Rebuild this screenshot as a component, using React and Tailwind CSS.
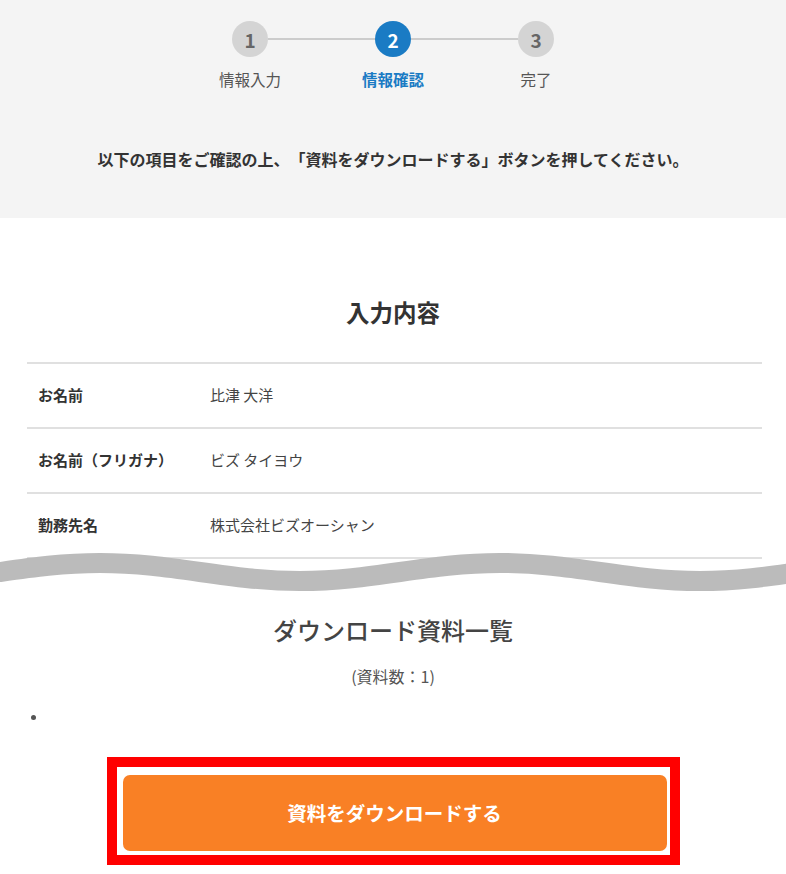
import React from 'react';

const FONT = { fontFamily: '"Noto Sans CJK JP", "Noto Sans", sans-serif' };

const steps = [
    { no: 1, label: '情報入力' },
    { no: 2, label: '情報確認', active: true },
    { no: 3, label: '完了' },
];

const rows = [
    { label: 'お名前', value: '比津 大洋' },
    { label: 'お名前（フリガナ）', value: 'ビズ タイヨウ' },
    { label: '勤務先名', value: '株式会社ビズオーシャン' },
];

const StepCircle = ({ no, active }) => (
    <div
        className={`w-[36px] h-[36px] rounded-full flex items-center justify-center text-[19px] font-bold leading-none ${
            active ? 'bg-[#1a7bc4] text-white' : 'bg-[#d4d4d4] text-[#666]'
        }`}
    >
        {no}
    </div>
);

const Steps = () => (
    <div className="pt-[21px]">
        <div className="flex items-center justify-center">
            {steps.map((s, i) => (
                <React.Fragment key={s.no}>
                    {i > 0 && <div className="w-[107px] h-[2px] bg-[#cccccc]" />}
                    <StepCircle no={s.no} active={s.active} />
                </React.Fragment>
            ))}
        </div>
        <div className="flex justify-center mt-[11px]">
            {steps.map((s) => (
                <div
                    key={s.no}
                    className={`w-[143px] text-center text-[15.5px] leading-[22px] ${
                        s.active ? 'text-[#1a7bc4] font-bold' : 'text-[#555]'
                    }`}
                >
                    {s.label}
                </div>
            ))}
        </div>
    </div>
);

// wavy gray band drawn over the bottom of the table
const Wave = () => (
    <svg
        className="absolute left-0 top-[-17px]"
        width="786"
        height="60"
        viewBox="0 0 786 60"
    >
        <path
            d="M -100 39 C -27 39, 27 21, 100 21 C 173 21, 227 39, 300 39 C 373 39, 427 21, 500 21 C 573 21, 627 39, 700 39 C 773 39, 827 21, 900 21"
            fill="none"
            stroke="#bbbbbb"
            strokeWidth="20"
        />
    </svg>
);

export default function App() {
    return (
        <div className="w-[786px] h-[874px] bg-white overflow-hidden [text-spacing-trim:space-all]" style={FONT}>
            <div className="h-[218px] bg-[#f4f4f4]">
                <Steps />
                <p className="mt-[57px] text-center text-[16px] leading-[24px] font-bold text-[#333]">
                    以下の項目をご確認の上、「資料をダウンロードする」ボタンを押してください。
                </p>
            </div>

            <h2 className="pt-[78px] text-center text-[23.5px] leading-[32px] font-bold text-[#333]">
                入力内容
            </h2>

            <div className="mt-[34px] ml-[27px] w-[735px] border-t-2 border-[#e0e0e0]">
                {rows.map((r) => (
                    <div
                        key={r.label}
                        className="flex items-center h-[65px] border-b-2 border-[#e0e0e0] text-[15px]"
                    >
                        <div className="w-[183px] pl-[11px] font-bold text-[#333]">{r.label}</div>
                        <div className="text-[#444]">{r.value}</div>
                    </div>
                ))}
            </div>

            <div className="relative h-0">
                <Wave />
            </div>

            <h2 className="mt-[55px] text-center text-[24px] leading-[32px] font-medium text-[#444]">
                ダウンロード資料一覧
            </h2>
            <p className="mt-[20px] text-center text-[16px] leading-[20px] text-[#555]">
                (資料数：1)
            </p>

            <ul className="mt-[19px]">
                <li className="h-[24px] flex items-center pl-[31px]">
                    <span className="w-[5px] h-[5px] rounded-full bg-[#555]" />
                </li>
            </ul>

            <div className="mt-[28px] mx-auto w-[573px] border-[10px] border-[#ff0000] bg-white pt-[8px] pb-[4px] pl-[6px] pr-[3px]">
                <button
                    type="button"
                    className="w-full h-[76px] rounded-[7px] bg-[#f98025] text-white text-[19.5px] font-bold"
                >
                    資料をダウンロードする
                </button>
            </div>
        </div>
    );
}
